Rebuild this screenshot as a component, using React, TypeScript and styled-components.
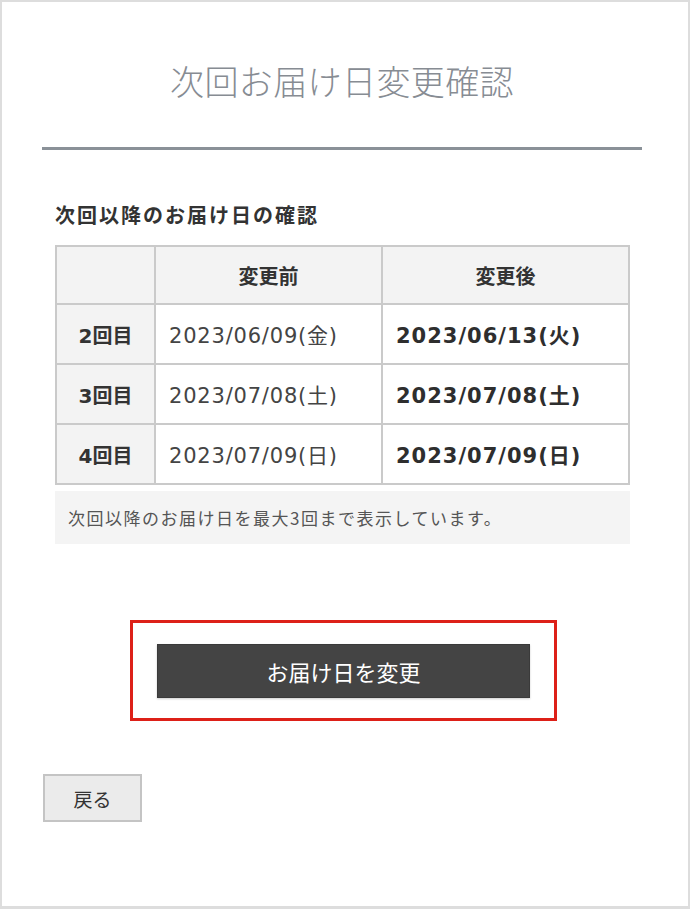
import React from "react";
import styled, { createGlobalStyle } from "styled-components";

const GlobalStyle = createGlobalStyle`
  html, body { margin: 0; padding: 0; background: #ffffff; }
  body { font-family: "DejaVu Sans", "Noto Sans CJK JP", sans-serif; color: #333333; }
  * { box-sizing: border-box; }
`;

const Page = styled.div`
  width: 690px;
  height: 909px;
  border: 2px solid #dddddd;
  border-bottom-width: 3px;
  padding: 0 46px 0 40px;
  display: flex;
  flex-direction: column;
  background: #ffffff;
`;

const Header = styled.header`
  padding: 53px 0 41px;
  border-bottom: 3px solid #8a9198;
  text-align: center;
`;

const Title = styled.h1`
  margin: 0;
  font-family: "Noto Sans CJK JP", sans-serif;
  font-size: 34px;
  line-height: 51px;
  font-weight: 300;
  letter-spacing: 0.4px;
  color: #878c93;
`;

const Section = styled.section`
  padding: 0 12px 0 13px;
  margin-top: 50px;
`;

const SubHeading = styled.h2`
  margin: 0 0 15px;
  font-family: "Noto Sans CJK JP", sans-serif;
  font-size: 20px;
  line-height: 30px;
  font-weight: 700;
  letter-spacing: 2px;
  color: #333333;
`;

const Table = styled.table`
  width: 100%;
  border-collapse: collapse;
  table-layout: fixed;
  font-size: 21px;
`;

const HeadCell = styled.th<{ $w?: number }>`
  width: ${(p) => (p.$w ? `${p.$w}px` : "auto")};
  height: 58px;
  border: 2px solid #cacaca;
  background: #f3f3f3;
  font-family: "Noto Sans CJK JP", sans-serif;
  font-size: 20px;
  font-weight: 700;
  text-align: center;
  color: #333333;
  padding: 0;
`;

const RowLabel = styled.th`
  height: 60px;
  border: 2px solid #cacaca;
  background: #f3f3f3;
  font-size: 20px;
  font-weight: 700;
  text-align: center;
  color: #333333;
  padding: 0;
`;

const DateCell = styled.td<{ $bold?: boolean }>`
  height: 60px;
  border: 2px solid #cacaca;
  padding: 0 0 0 13px;
  font-weight: ${(p) => (p.$bold ? 700 : 400)};
  letter-spacing: ${(p) => (p.$bold ? "1px" : "0.8px")};
  color: ${(p) => (p.$bold ? "#2e2e2e" : "#444444")};
  text-align: left;
`;

const Note = styled.div`
  margin-top: 6px;
  height: 53px;
  padding: 0 13px;
  display: flex;
  align-items: center;
  background: #f4f4f4;
  font-family: "Noto Sans CJK JP", sans-serif;
  font-size: 17px;
  letter-spacing: 1.5px;
  color: #555555;
`;

const ActionArea = styled.div`
  margin-top: 76px;
  display: flex;
  justify-content: center;
`;

const Highlight = styled.div`
  border: 3px solid #dd2018;
  padding: 21px 24px 20px;
  margin-left: 3px;
`;

const PrimaryButton = styled.button`
  display: block;
  width: 373px;
  height: 54px;
  border: 1px solid #3a3a3a;
  background: #444444;
  color: #ffffff;
  font-family: "Noto Sans CJK JP", sans-serif;
  font-size: 22px;
  cursor: pointer;
  box-shadow: 0 1px 2px rgba(0, 0, 0, 0.2);
`;

const BackRow = styled.div`
  margin-top: 53px;
  padding-left: 1px;
`;

const BackButton = styled.button`
  width: 99px;
  height: 48px;
  border: 2px solid #c4c4c4;
  background: #ebebeb;
  color: #333333;
  font-family: "Noto Sans CJK JP", sans-serif;
  font-size: 19px;
  cursor: pointer;
`;

const rows = [
  { label: "2回目", before: "2023/06/09(金)", after: "2023/06/13(火)" },
  { label: "3回目", before: "2023/07/08(土)", after: "2023/07/08(土)" },
  { label: "4回目", before: "2023/07/09(日)", after: "2023/07/09(日)" },
];

export default function App() {
  return (
    <>
      <GlobalStyle />
      <Page>
        <Header>
          <Title>次回お届け日変更確認</Title>
        </Header>
        <Section>
          <SubHeading>次回以降のお届け日の確認</SubHeading>
          <Table>
            <thead>
              <tr>
                <HeadCell $w={99}></HeadCell>
                <HeadCell $w={227}>変更前</HeadCell>
                <HeadCell>変更後</HeadCell>
              </tr>
            </thead>
            <tbody>
              {rows.map((r) => (
                <tr key={r.label}>
                  <RowLabel>{r.label}</RowLabel>
                  <DateCell>{r.before}</DateCell>
                  <DateCell $bold>{r.after}</DateCell>
                </tr>
              ))}
            </tbody>
          </Table>
          <Note>次回以降のお届け日を最大3回まで表示しています。</Note>
        </Section>
        <ActionArea>
          <Highlight>
            <PrimaryButton type="button">お届け日を変更</PrimaryButton>
          </Highlight>
        </ActionArea>
        <BackRow>
          <BackButton type="button">戻る</BackButton>
        </BackRow>
      </Page>
    </>
  );
}
